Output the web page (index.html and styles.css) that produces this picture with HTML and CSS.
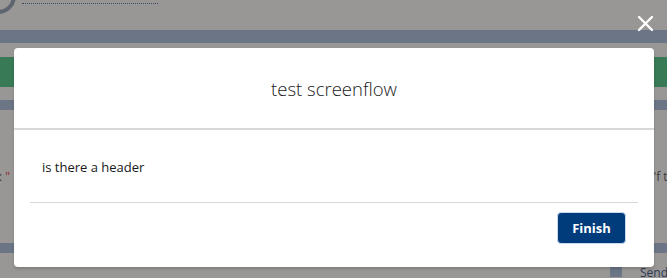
FILE: index.html
```html
<!DOCTYPE html>
<html lang="en">
<head>
    <meta charset="UTF-8">
    <meta name="viewport" content="width=device-width, initial-scale=1.0">
    <title>test screenflow</title>
    <link rel="stylesheet" href="styles.css">
</head>
<body>
    <div class="page">
        <div class="top-bar">
            <span class="avatar"></span>
            <span class="dots"></span>
        </div>
        <div class="band slate"></div>
        <div class="gap small"></div>
        <div class="band green"></div>
        <div class="gap"></div>
        <div class="band slate thin"></div>
        <div class="record-row">
            <span class="side-text">: <span class="quote">"</span></span>
            <span class="side-text right">'f th</span>
        </div>
        <div class="band slate low"></div>
        <div class="tabs">
            <span>DOCUMENTS</span>
            <span>NOTES</span>
            <span>FEEDBACK</span>
            <span class="tab-block"></span>
            <span class="send">Send</span>
        </div>
    </div>

    <div class="overlay">
        <button class="close-btn" aria-label="Close">
            <svg width="17" height="17" viewBox="0 0 17 17">
                <path d="M2 2 L15 15 M15 2 L2 15" stroke="#fff" stroke-width="2.4" stroke-linecap="round"/>
            </svg>
        </button>
        <div class="modal">
            <div class="modal-header">
                <h2>test screenflow</h2>
            </div>
            <div class="modal-body">
                <p>is there a header</p>
            </div>
            <div class="modal-footer">
                <button class="finish-btn">Finish</button>
            </div>
        </div>
    </div>
</body>
</html>
```

FILE: styles.css
```css
body {
    margin: 0;
    padding: 0;
    width: 667px;
    height: 278px;
    overflow: hidden;
    position: relative;
    background-color: #999795;
    font-family: "Open Sans", Lato, sans-serif;
}
.page {
    height: 278px;
    overflow: hidden;
}
.top-bar {
    height: 30px;
    position: relative;
}
.avatar {
    position: absolute;
    left: -20px;
    top: -22px;
    width: 28px;
    height: 28px;
    border: 4px solid #5e6470;
    border-radius: 50%;
}
.dots {
    position: absolute;
    left: 22px;
    top: 3px;
    width: 136px;
    border-top: 1px dotted #3c4a60;
}
.band {
    height: 13px;
}
.slate {
    background-color: #6b7585;
}
.green {
    height: 30px;
    background-color: #387a55;
}
.gap {
    height: 13px;
}
.gap.small {
    height: 14px;
}
.slate.thin {
    height: 10px;
}
.record-row {
    height: 133px;
    display: flex;
    justify-content: space-between;
    align-items: flex-start;
    font-size: 12px;
    color: #3a3a3a;
    padding-top: 58px;
    box-sizing: border-box;
}
.side-text {
    margin-left: -1px;
}
.quote {
    color: #8a2b2b;
}
.side-text.right {
    margin-right: -8px;
}
.slate.low {
    height: 10px;
}
.tabs {
    display: flex;
    align-items: flex-start;
    padding-left: 6px;
    font-size: 12px;
    color: #3a3e48;
    height: 24px;
    position: relative;
}
.tabs span {
    margin-top: 23px;
    letter-spacing: 1px;
    line-height: 14px;
}
.tabs span:nth-child(2) {
    margin-left: 68px;
}
.tabs span:nth-child(3) {
    margin-left: 64px;
}
.tab-block {
    position: absolute;
    left: 610px;
    top: 0;
    width: 12px;
    height: 24px;
    background-color: #6b7585;
    margin-top: 0 !important;
}
.send {
    position: absolute;
    left: 640px;
    top: -10px;
    color: #2d3a55;
    letter-spacing: 0 !important;
}

.overlay {
    position: absolute;
    top: 0;
    left: 0;
    width: 667px;
    height: 278px;
}
.close-btn {
    position: absolute;
    left: 637px;
    top: 15px;
    width: 17px;
    height: 17px;
    padding: 0;
    border: none;
    background: none;
}
.close-btn svg {
    display: block;
}
.modal {
    position: absolute;
    left: 14px;
    top: 48px;
    width: 640px;
    height: 219px;
    background-color: #fff;
    border-radius: 4px;
    box-shadow: 0 2px 3px rgba(0,0,0,0.16);
    display: flex;
    flex-direction: column;
}
.modal-header {
    height: 82px;
    border-bottom: 2px solid #d8d8d8;
    display: flex;
    align-items: center;
    justify-content: center;
    box-sizing: border-box;
}
.modal-header h2 {
    margin: 0;
    font-size: 18.5px;
    font-weight: 300;
    color: #16181a;
}
.modal-body {
    height: 73px;
    margin: 0 16px;
    border-bottom: 1px solid #d8d8d8;
    display: flex;
    align-items: center;
    box-sizing: border-box;
}
.modal-body p {
    margin: 0 0 0 12px;
    font-size: 13px;
    color: #16181a;
    padding-top: 2px;
}
.modal-footer {
    display: flex;
    justify-content: flex-end;
    padding: 9px 28px 0 0;
}
.finish-btn {
    width: 69px;
    height: 32px;
    border: 1px solid #c6dbf2;
    border-radius: 4px;
    background-color: #003b7b;
    color: #fff;
    font-family: inherit;
    font-size: 13px;
    font-weight: 700;
    padding: 0;
}
```
